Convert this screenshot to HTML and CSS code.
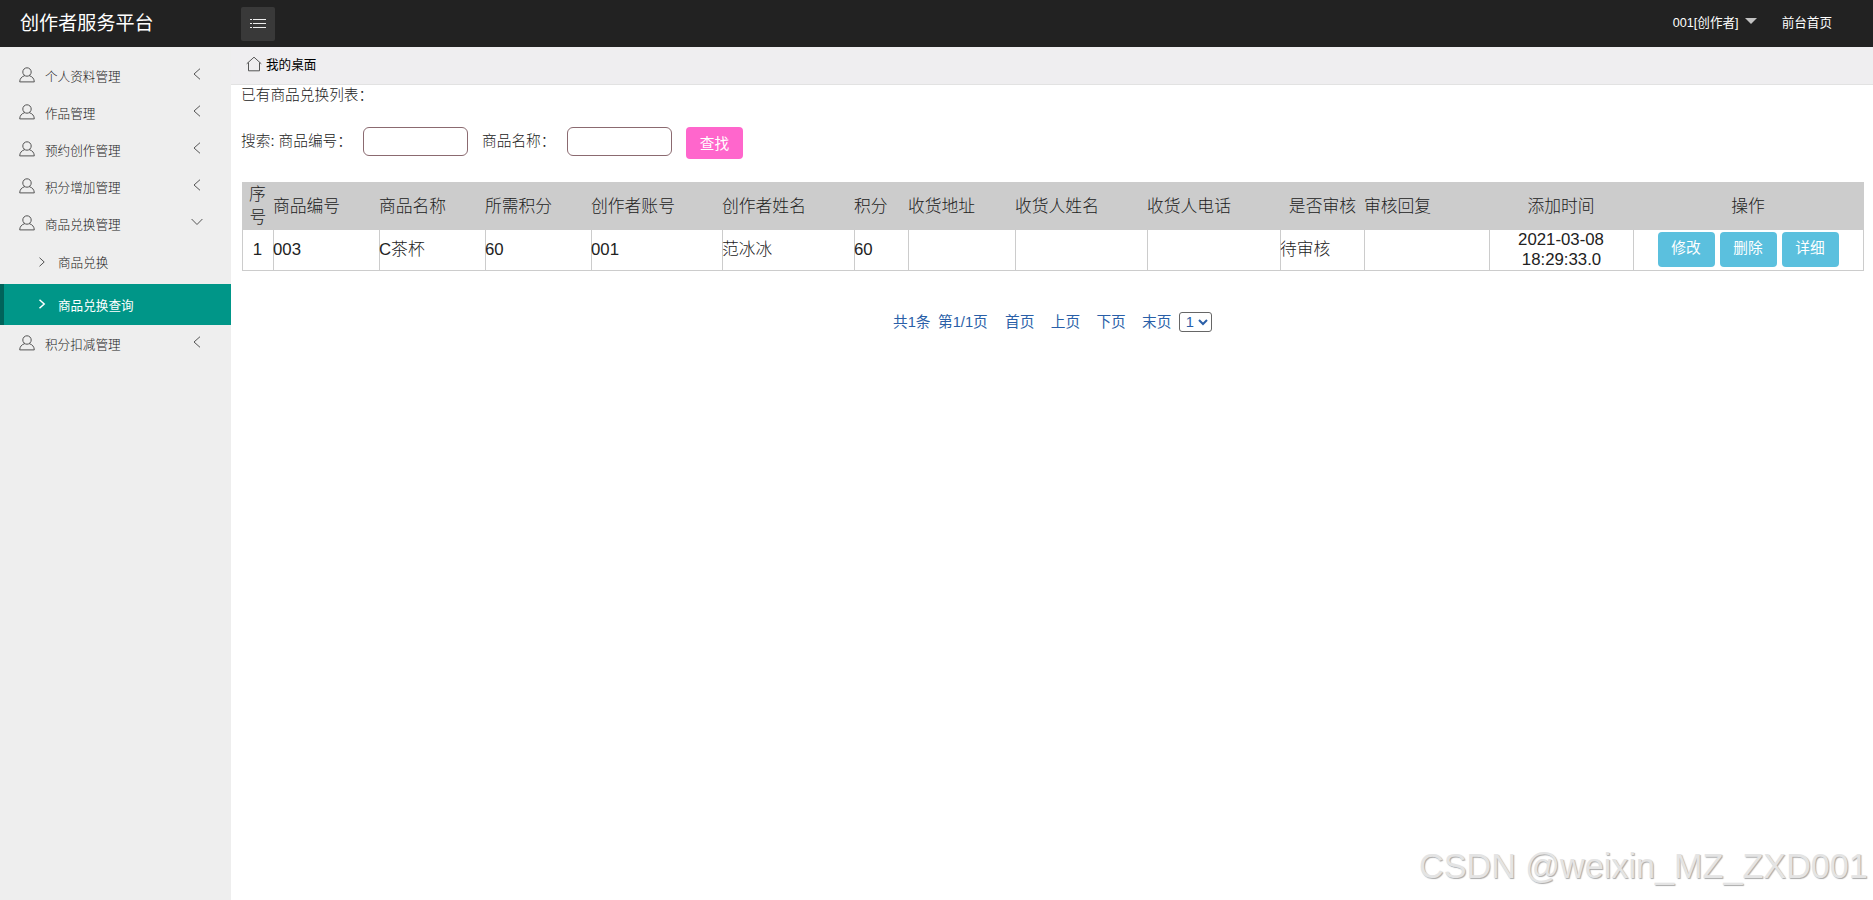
FILE: index.html
```
<!DOCTYPE html>
<html lang="zh-CN">
<head>
    <meta charset="utf-8">
    <title>创作者服务平台</title>
    <link rel="stylesheet" href="styles.css">
</head>
<body>
<svg class="defs">
    <symbol id="user" viewBox="0 0 16 16"><circle cx="8" cy="5" r="4.2"/><path d="M5.8 8.6C2.6 9.6.8 11.6.7 14.9h14.6C15.2 11.6 13.4 9.6 10.2 8.6"/></symbol>
    <symbol id="left" viewBox="0 0 12 12"><path d="M9 .7 3 6l6 5.3"/></symbol>
    <symbol id="down" viewBox="0 0 12 12"><path d="M.6 3 6 8.5 11.4 3"/></symbol>
    <symbol id="right" viewBox="0 0 12 12"><path d="M3.5 1.7 8.2 6l-4.7 4.3"/></symbol>
</svg>
<div class="header">
    <div class="logo">创作者服务平台</div>
    <div class="toggle"><svg viewBox="0 0 16 12"><path d="M0 1.5h2M3 1.5h13M0 5.500h2M3 5.500h13M0 9.500h2M3 9.500h13"/></svg></div>
    <div class="top-nav">
        <a>001[创作者]<i class="caret"></i></a>
        <a>前台首页</a>
    </div>
</div>
<div class="main">
    <div class="side">
        <div class="menu"><svg><use href="#user"/></svg><span>个人资料管理</span><svg class="arrow"><use href="#left"/></svg></div>
        <div class="menu"><svg><use href="#user"/></svg><span>作品管理</span><svg class="arrow"><use href="#left"/></svg></div>
        <div class="menu"><svg><use href="#user"/></svg><span>预约创作管理</span><svg class="arrow"><use href="#left"/></svg></div>
        <div class="menu"><svg><use href="#user"/></svg><span>积分增加管理</span><svg class="arrow"><use href="#left"/></svg></div>
        <div class="menu"><svg><use href="#user"/></svg><span>商品兑换管理</span><svg class="arrow"><use href="#down"/></svg></div>
        <div class="sub"><svg><use href="#right"/></svg><span>商品兑换</span></div>
        <div class="sub active"><svg><use href="#right"/></svg><span>商品兑换查询</span></div>
        <div class="menu"><svg><use href="#user"/></svg><span>积分扣减管理</span><svg class="arrow"><use href="#left"/></svg></div>
    </div>
    <div class="page">
        <div class="tabs"><svg viewBox="0 0 16 16"><path d="M.7 7.8 8 1.2l7.3 6.6M2.5 6.5v8.300h11V6.5"/></svg>我的桌面</div>
        <div class="content">
            <div class="title">已有商品兑换列表：</div>
            <form class="search">
                <label class="first">搜索: 商品编号：</label>
                <input type="text">
                <label class="second">商品名称：</label>
                <input type="text">
                <button type="button">查找</button>
            </form>
            <table>
                <colgroup>
                    <col class="w31"><col class="w106"><col class="w106"><col class="w106"><col class="w131"><col class="w132"><col class="w54">
                    <col class="w107"><col class="w132"><col class="w133"><col class="w84"><col class="w125"><col class="w144"><col class="w230">
                </colgroup>
                <tr class="head">
                    <td class="center">序号</td>
                    <td>商品编号</td>
                    <td>商品名称</td>
                    <td>所需积分</td>
                    <td>创作者账号</td>
                    <td>创作者姓名</td>
                    <td>积分</td>
                    <td>收货地址</td>
                    <td>收货人姓名</td>
                    <td>收货人电话</td>
                    <td class="check">是否审核</td>
                    <td>审核回复</td>
                    <td class="center">添加时间</td>
                    <td class="center">操作</td>
                </tr>
                <tr class="row">
                    <td class="center">1</td>
                    <td>003</td>
                    <td>C茶杯</td>
                    <td>60</td>
                    <td>001</td>
                    <td>范冰冰</td>
                    <td>60</td>
                    <td></td>
                    <td></td>
                    <td></td>
                    <td>待审核</td>
                    <td></td>
                    <td class="center">2021-03-08 18:29:33.0</td>
                    <td><div class="ops"><a>修改</a><a>删除</a><a>详细</a></div></td>
                </tr>
            </table>
            <div class="pager">
                <span class="total">共1条</span>
                <span class="pages">第1/1页</span>
                <a>首页</a>
                <a>上页</a>
                <a>下页</a>
                <a>末页</a>
                <div class="select">1<svg viewBox="0 0 10 8"><path d="M1 2l4 4 4-4"/></svg></div>
            </div>
        </div>
    </div>
</div>
<div class="watermark">CSDN @weixin_MZ_ZXD001</div>
</body>
</html>
```
FILE: styles.css
```
* {
    box-sizing: border-box;
}
body {
    margin: 0;
    height: 900px;
    overflow: hidden;
    display: flex;
    flex-direction: column;
    font-family: "Liberation Sans", "Noto Sans CJK SC", sans-serif;
    font-size: 12.6px;
    font-weight: 300;
    color: #222;
    background: #fff;
}
svg {
    fill: none;
    stroke: #555;
    stroke-width: 1;
}
.defs {
    display: none;
}
.header {
    height: 47px;
    flex: none;
    display: flex;
    align-items: center;
    background: #222;
    color: #fff;
}
.logo {
    width: 241px;
    padding: 0 0 3px 20px;
    font-size: 19.1px;
    font-weight: 400;
}
.toggle {
    width: 34px;
    height: 34px;
    display: flex;
    align-items: center;
    justify-content: center;
    background: #393939;
    border-radius: 2px;
}
.toggle svg {
    width: 16px;
    height: 12px;
    stroke: #eee;
}
.top-nav {
    margin-left: auto;
    padding: 0 41px 4px 0;
    display: flex;
    gap: 25px;
    font-weight: 400;
}
.top-nav a {
    display: flex;
    align-items: center;
}
.caret {
    margin: -2px 0 0 6px;
    border: 6px solid transparent;
    border-top-color: #c2c2c2;
    border-bottom: 0;
}
.main {
    flex: 1;
    display: flex;
}
.side {
    width: 231px;
    flex: none;
    padding-top: 10px;
    background: #eee;
}
.menu {
    height: 37px;
    display: flex;
    align-items: center;
    padding: 0 28px 1px 19px;
}
.menu svg {
    width: 16px;
    height: 16px;
    margin-right: 10px;
}
.menu .arrow {
    width: 12px;
    height: 12px;
    margin: -2px 0 0 auto;
}
.sub {
    height: 42px;
    display: flex;
    align-items: center;
    padding: 0 0 3px 36px;
}
.sub svg {
    width: 12px;
    height: 12px;
    margin-right: 10px;
}
.sub.active {
    height: 41px;
    padding: 0 0 1px 32px;
    border-left: 4px solid #00635a;
    background: #009688;
    color: #fff;
    font-weight: 400;
}
.sub.active svg {
    stroke: #fff;
    stroke-width: 1.5;
}
.page {
    flex: 1;
}
.tabs {
    height: 38px;
    display: flex;
    align-items: center;
    padding: 0 0 4px 15px;
    background: #efeef0;
    border-bottom: 1px solid #e2e2e2;
    color: #000;
    font-weight: 400;
}
.tabs svg {
    width: 16px;
    height: 16px;
    margin-right: 4px;
}
.content {
    padding: 0 10px 0 11px;
    font-size: 14.7px;
}
.title {
    height: 42px;
    margin-left: -1px;
    line-height: 20px;
}
.search {
    height: 55px;
    display: flex;
    align-items: flex-start;
}
.search label {
    line-height: 29px;
    text-indent: -1px;
}
.search .first {
    width: 121px;
}
.search .second {
    width: 84px;
}
.search input {
    width: 105px;
    height: 29px;
    margin-right: 15px;
    border: 1px solid #8b6a70;
    border-radius: 6px;
    background: #fff;
}
.search button {
    width: 57px;
    height: 32px;
    margin-left: -1px;
    padding: 0 0 2px;
    border: 0;
    border-radius: 4px;
    background: #ff66cc;
    color: #fff;
    font: inherit;
    font-weight: 400;
}
table {
    width: 1622px;
    table-layout: fixed;
    border-collapse: collapse;
    font-size: 16.8px;
    line-height: 20px;
}
.w31 { width: 31px; }
.w54 { width: 54px; }
.w84 { width: 84px; }
.w106 { width: 106px; }
.w107 { width: 107px; }
.w125 { width: 125px; }
.w131 { width: 131px; }
.w132 { width: 132px; }
.w133 { width: 133px; }
.w144 { width: 144px; }
.w230 { width: 230px; }
td {
    padding: 0;
    border: 1px solid #ccc;
    text-indent: -1px;
}
.head {
    height: 47px;
    background: #ccc;
}
.head td {
    line-height: 23px;
}
.head .check {
    padding-right: 8px;
    text-align: right;
}
.row {
    height: 41px;
}
.center {
    text-align: center;
}
.ops {
    display: flex;
    justify-content: center;
    gap: 5px;
    margin-top: -2px;
}
.ops a {
    width: 57px;
    height: 35px;
    border-radius: 4px;
    background: #5bc0de;
    color: #fff;
    font-size: 14.7px;
    font-weight: 400;
    line-height: 33px;
    text-align: center;
}
.pager {
    display: flex;
    align-items: center;
    padding: 41px 0 0 651px;
    line-height: 20px;
    font-weight: 400;
    color: #2a5fa8;
}
.pager .total {
    width: 45px;
}
.pager .pages {
    width: 67px;
}
.pager a {
    width: 45.7px;
}
.select {
    width: 33px;
    height: 20px;
    margin-left: -9px;
    display: flex;
    align-items: center;
    gap: 4px;
    padding-left: 6px;
    border: 1px solid #666;
    border-radius: 3px;
}
.select svg {
    width: 10px;
    height: 8px;
    stroke: #2a5fa8;
    stroke-width: 2;
}
.watermark {
    position: absolute;
    left: 1419px;
    top: 846px;
    font-size: 34.2px;
    line-height: 40px;
    white-space: nowrap;
    color: #e4e4e4;
    text-shadow: 1px 1px 1px #aaa;
}
```
